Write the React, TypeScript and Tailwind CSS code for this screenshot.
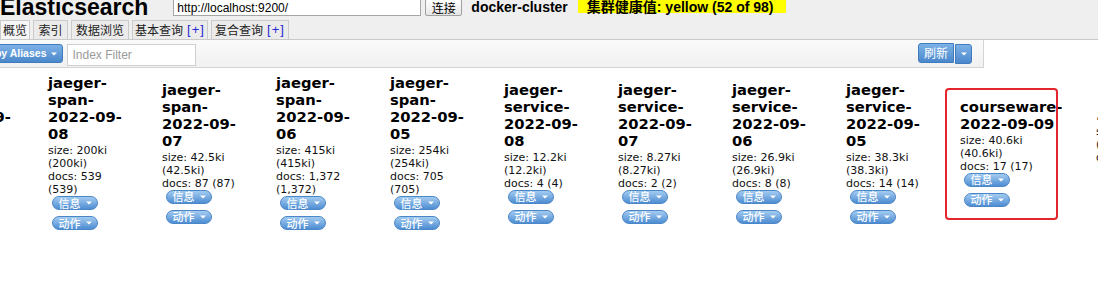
import React from "react";

interface IndexCol {
	name: string[];
	details: string[];
	width: number;
	marked?: boolean;
}

const cols: IndexCol[] = [
	{ name: ["jaeger-", "span-", "2022-09-", "09"], details: ["size: 180ki", "(180ki)", "docs: 481", "(481)"], width: 111 },
	{ name: ["jaeger-", "span-", "2022-09-", "08"], details: ["size: 200ki", "(200ki)", "docs: 539", "(539)"], width: 114 },
	{ name: ["jaeger-", "span-", "2022-09-", "07"], details: ["size: 42.5ki", "(42.5ki)", "docs: 87 (87)"], width: 114 },
	{ name: ["jaeger-", "span-", "2022-09-", "06"], details: ["size: 415ki", "(415ki)", "docs: 1,372", "(1,372)"], width: 114 },
	{ name: ["jaeger-", "span-", "2022-09-", "05"], details: ["size: 254ki", "(254ki)", "docs: 705", "(705)"], width: 114 },
	{ name: ["jaeger-", "service-", "2022-09-", "08"], details: ["size: 12.2ki", "(12.2ki)", "docs: 4 (4)"], width: 114 },
	{ name: ["jaeger-", "service-", "2022-09-", "07"], details: ["size: 8.27ki", "(8.27ki)", "docs: 2 (2)"], width: 114 },
	{ name: ["jaeger-", "service-", "2022-09-", "06"], details: ["size: 26.9ki", "(26.9ki)", "docs: 8 (8)"], width: 114 },
	{ name: ["jaeger-", "service-", "2022-09-", "05"], details: ["size: 38.3ki", "(38.3ki)", "docs: 14 (14)"], width: 114 },
	{ name: ["courseware-", "2022-09-09"], details: ["size: 40.6ki", "(40.6ki)", "docs: 17 (17)"], width: 136, marked: true },
	{ name: [".kibana_1"], details: ["size: 9.8ki", "(9.8ki)", "docs: 3 (3)"], width: 114 },
];

const Caret = () => (
	<svg width="6" height="4" viewBox="0 0 6 4" className="shrink-0">
		<path d="M0 0.5h6L3 3.5z" fill="#ffffff" />
	</svg>
);

const Pill = ({ label }: { label: string }) => (
	<div className="ml-[4px] flex h-[14px] w-[46px] items-center justify-center gap-[5px] rounded-full border border-[#4b86c6] bg-linear-to-b from-[#a3cbf0] to-[#4d8dd2] font-['Noto_Sans_CJK_SC',sans-serif] text-[11px] font-medium leading-none text-white">
		<span>{label}</span>
		<Caret />
	</div>
);

const Column = ({ col }: { col: IndexCol }) => (
	<div className="relative shrink-0" style={{ width: col.width }}>
		{col.marked && (
			<div className="absolute -left-[15px] -top-[10px] h-[132px] w-[113px] rounded-[4px] border-2 border-[#e3262b]" />
		)}
		<div className="whitespace-nowrap font-['DejaVu_Sans',sans-serif] text-[14.75px] font-bold leading-[17px] text-black">
			{col.name.map((l) => (
				<div key={l}>{l}</div>
			))}
		</div>
		<div className="mt-[2px] whitespace-nowrap font-['DejaVu_Sans',sans-serif] text-[11px] leading-[13px] text-[#111]">
			{col.details.map((l) => (
				<div key={l}>{l}</div>
			))}
		</div>
		<div className="flex flex-col gap-[6px]">
			<Pill label="信息" />
			<Pill label="动作" />
		</div>
	</div>
);

const tabs = [
	{ label: "概览", w: "w-[30px]", active: true },
	{ label: "索引", w: "w-[35px]" },
	{ label: "数据浏览", w: "w-[58px]" },
	{ label: "基本查询", w: "w-[76px]", plus: true },
	{ label: "复合查询", w: "w-[78px]", plus: true },
];

export default function App() {
	return (
		<div className="h-[307px] w-[1098px] overflow-hidden bg-white font-['Liberation_Sans','Noto_Sans_CJK_SC',sans-serif]">
			<div className="bg-[#efefef]">
				<div className="flex h-[21px] items-start">
					<div className="-mt-[2px] text-[23px] font-bold leading-[18px] text-black">Elasticsearch</div>
					<div className="-mt-[1px] ml-[25px] flex h-[17px] w-[248px] items-center border border-[#a5a5a5] bg-white pl-[3px] text-[12px] text-black">
						http://localhost:9200/
					</div>
					<button className="-mt-[1px] ml-[4px] h-[17px] w-[37px] rounded-[2px] border border-[#a0a0a0] bg-linear-to-b from-white to-[#e6e6e6] font-['Noto_Sans_CJK_SC',sans-serif] text-[12px] leading-none text-black">
						连接
					</button>
					<div className="ml-[9px] text-[14px] font-bold leading-[15px] text-black">docker-cluster</div>
					<div className="ml-[10px] h-[13px] w-[208px] bg-[#ffff00] pl-[9px] text-[14px] font-bold leading-[14px] text-black">
						集群健康值: yellow (52 of 98)
					</div>
				</div>
				<div className="flex h-[19px] items-end gap-[3px] border-b border-[#c9c9c9]">
					{tabs.map((t) => (
						<div
							key={t.label}
							className={`${t.w} flex h-[19px] items-center justify-center border border-b-0 border-[#cbcbcb] text-[12px] text-[#222] ${t.active ? "bg-[#f6f6f6]" : "bg-[#ebebeb]"}`}
						>
							<span className="font-['Noto_Sans_CJK_SC',sans-serif]">{t.label}</span>
							{t.plus && <span className="ml-[4px] text-[13px] tracking-[1px] text-[#2a2ad0]">[+]</span>}
						</div>
					))}
				</div>
			</div>
			<div className="flex h-[28px] w-[984px] items-start border-b border-r border-[#d4d4d4] bg-linear-to-b from-[#fafafa] to-[#f1f1f1]">
				<button className="-ml-[36px] mt-[4px] flex h-[19px] items-center gap-[5px] rounded-[3px] border border-[#3f7bbd] bg-linear-to-b from-[#7db1e6] to-[#4a88cc] pl-[6px] pr-[5px] text-[10.5px] font-bold text-white">
					Sort by Aliases
					<Caret />
				</button>
				<div className="ml-[4px] mt-[4px] flex h-[22px] w-[129px] items-center border border-[#cfcfcf] bg-white pl-[4px] text-[12px] text-[#9a9a9a]">
					Index Filter
				</div>
				<div className="ml-auto mr-[11px] mt-[3px] flex">
					<button className="h-[20px] w-[36px] rounded-l-[3px] border border-[#3f7bbd] bg-linear-to-b from-[#7db1e6] to-[#4a88cc] font-['Noto_Sans_CJK_SC',sans-serif] text-[12px] leading-none text-white">
						刷新
					</button>
					<button className="ml-px mt-px flex h-[20px] w-[17px] items-center justify-center rounded-r-[3px] border border-[#3f7bbd] bg-linear-to-b from-[#7db1e6] to-[#4a88cc]">
						<Caret />
					</button>
				</div>
			</div>
			<div className="-ml-[63px] flex h-[168px] items-center">
				{cols.map((c, i) => (
					<Column key={i} col={c} />
				))}
			</div>
		</div>
	);
}
